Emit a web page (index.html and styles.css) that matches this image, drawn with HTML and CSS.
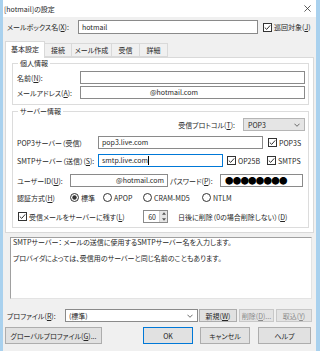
FILE: index.html
```html
<!DOCTYPE html>
<html lang="ja">
<head>
    <meta charset="UTF-8">
    <title>[hotmail]の設定</title>
    <link rel="stylesheet" href="styles.css">
</head>
<body>
    <div class="window">
        <div class="titlebar">
            <span class="title">[hotmail]の設定</span>
            <svg class="close" viewBox="0 0 8 8"><path d="M0.5 0.5 L7.5 7.5 M7.5 0.5 L0.5 7.5" stroke="#333" stroke-width="0.9"/></svg>
        </div>

        <div class="row mailbox-row">
            <span class="lbl w-mailbox">メールボックス名(<u>X</u>):</span>
            <div class="input in-mailbox">hotmail</div>
            <span class="check ml5">
                <svg class="cb" viewBox="0 0 9 9"><rect x="0.5" y="0.5" width="8" height="8" fill="#fff" stroke="#333"/><path d="M1.8 4.6 L3.7 6.4 L7.2 2.4" fill="none" stroke="#333"/></svg>巡回対象(<u>J</u>)
            </span>
        </div>

        <div class="tabs">
            <div class="tab active t1">基本設定</div>
            <div class="tab t2">接続</div>
            <div class="tab t3">メール作成</div>
            <div class="tab t4">受信</div>
            <div class="tab t5">詳細</div>
        </div>

        <div class="panel">
            <fieldset class="group group-personal">
                <legend>個人情報</legend>
                <div class="row r-name">
                    <span class="lbl w-personal">名前(<u>N</u>):</span>
                    <div class="input in-personal"></div>
                </div>
                <div class="row r-mail">
                    <span class="lbl w-personal">メールアドレス(<u>A</u>):</span>
                    <div class="input in-personal addr">@hotmail.com</div>
                </div>
            </fieldset>

            <fieldset class="group group-server">
                <legend>サーバー情報</legend>
                <div class="row r-proto">
                    <span class="lbl">受信プロトコル(<u>T</u>):</span>
                    <div class="select sel-proto">
                        <span>POP3</span>
                        <svg class="arrow" viewBox="0 0 7 4"><path d="M0.5 0.5 L3.5 3.5 L6.5 0.5" fill="none" stroke="#555"/></svg>
                    </div>
                </div>
                <div class="row r-pop">
                    <span class="lbl w-server">POP3サーバー（受信）</span>
                    <div class="input in-pop">pop3.live.com</div>
                    <span class="check ml5">
                        <svg class="cb" viewBox="0 0 9 9"><rect x="0.5" y="0.5" width="8" height="8" fill="#fff" stroke="#333"/><path d="M1.8 4.6 L3.7 6.4 L7.2 2.4" fill="none" stroke="#333"/></svg>POP3S
                    </span>
                </div>
                <div class="row r-smtp">
                    <span class="lbl w-server">SMTPサーバー（送信）(<u>S</u>):</span>
                    <div class="input in-smtp focus">smtp.live.com<span class="caret"></span></div>
                    <span class="check w-op25b">
                        <svg class="cb" viewBox="0 0 9 9"><rect x="0.5" y="0.5" width="8" height="8" fill="#fff" stroke="#333"/><path d="M1.8 4.6 L3.7 6.4 L7.2 2.4" fill="none" stroke="#333"/></svg>OP25B
                    </span>
                    <span class="check">
                        <svg class="cb" viewBox="0 0 9 9"><rect x="0.5" y="0.5" width="8" height="8" fill="#fff" stroke="#333"/><path d="M1.8 4.6 L3.7 6.4 L7.2 2.4" fill="none" stroke="#333"/></svg>SMTPS
                    </span>
                </div>
                <div class="row r-user">
                    <span class="lbl w-user">ユーザーID(<u>U</u>):</span>
                    <div class="input in-user">@hotmail.com</div>
                    <span class="lbl w-pass">パスワード(<u>P</u>):</span>
                    <div class="input in-pass">●●●●●●●●</div>
                </div>
                <div class="row r-auth">
                    <span class="lbl w-user">認証方式(<u>H</u>)</span>
                    <span class="radio w-r1">
                        <svg class="rb" viewBox="0 0 9 9"><circle cx="4.5" cy="4.5" r="4" fill="#fff" stroke="#333"/><circle cx="4.5" cy="4.5" r="2.2" fill="#333"/></svg>標準
                    </span>
                    <span class="radio w-r2">
                        <svg class="rb" viewBox="0 0 9 9"><circle cx="4.5" cy="4.5" r="4" fill="#fff" stroke="#333"/></svg>APOP
                    </span>
                    <span class="radio w-r3">
                        <svg class="rb" viewBox="0 0 9 9"><circle cx="4.5" cy="4.5" r="4" fill="#fff" stroke="#333"/></svg>CRAM-MD5
                    </span>
                    <span class="radio">
                        <svg class="rb" viewBox="0 0 9 9"><circle cx="4.5" cy="4.5" r="4" fill="#fff" stroke="#333"/></svg>NTLM
                    </span>
                </div>
                <div class="row r-leave">
                    <span class="check w-leave">
                        <svg class="cb" viewBox="0 0 9 9"><rect x="0.5" y="0.5" width="8" height="8" fill="#fff" stroke="#333"/><path d="M1.8 4.6 L3.7 6.4 L7.2 2.4" fill="none" stroke="#333"/></svg>受信メールをサーバーに残す(<u>L</u>)
                    </span>
                    <div class="spin">
                        <span class="spin-val">60</span>
                        <span class="spin-btns">
                            <svg viewBox="0 0 5 3"><path d="M0 3 L2.5 0 L5 3 Z" fill="#555"/></svg>
                            <svg viewBox="0 0 5 3"><path d="M0 0 L2.5 3 L5 0 Z" fill="#555"/></svg>
                        </span>
                    </div>
                    <span class="lbl days">日後に削除（0の場合削除しない）(<u>D</u>)</span>
                </div>
            </fieldset>
        </div>

        <div class="desc">
            <p>SMTPサーバー： メールの送信に使用するSMTPサーバー名を入力します。</p>
            <p>&nbsp;</p>
            <p>プロバイダによっては、受信用のサーバーと同じ名前のこともあります。</p>
        </div>

        <div class="row profile-row">
            <span class="lbl w-profile">プロファイル(<u>R</u>):</span>
            <div class="select sel-profile">
                <span>(標準)</span>
                <svg class="arrow" viewBox="0 0 7 4"><path d="M0.5 0.5 L3.5 3.5 L6.5 0.5" fill="none" stroke="#555"/></svg>
            </div>
            <div class="btn small b-new">新規(<u>W</u>)</div>
            <div class="btn small disabled b-del">削除(<u>D</u>)...</div>
            <div class="btn small disabled b-imp">取込(<u>Y</u>)</div>
        </div>

        <div class="row button-row">
            <div class="btn b-global">グローバルプロファイル(<u>G</u>)...</div>
            <div class="btn default b-ok">OK</div>
            <div class="btn b-cancel">キャンセル</div>
            <div class="btn b-help">ヘルプ</div>
        </div>
    </div>
</body>
</html>
```

FILE: styles.css
```css
body {
    margin: 0;
    background-color: #f0f0f0;
    font-family: "Noto Sans CJK JP", "Noto Sans", sans-serif;
    font-size: 7px;
    font-feature-settings: "palt";
    color: #262626;
}

u {
    text-decoration: underline;
    text-decoration-thickness: 0.5px;
    text-underline-offset: 1px;
}

.window {
    width: 313px;
    height: 351px;
    border-left: 3px solid #a9d1ee;
    border-right: 4px solid #a9d1ee;
    background-color: #f0f0f0;
}

.titlebar {
    height: 17px;
    background-color: #fff;
    display: flex;
    align-items: center;
    justify-content: space-between;
    padding: 0 5px 0 1px;
}

.close {
    width: 7px;
    height: 7px;
}

.row {
    display: flex;
    align-items: center;
    height: 13px;
}

.lbl {
    white-space: nowrap;
    flex-shrink: 0;
}

.input {
    height: 13px;
    box-sizing: border-box;
    border: 1px solid #8a8a8a;
    background-color: #fff;
    padding: 0 3px;
    line-height: 11px;
    white-space: nowrap;
    overflow: hidden;
    flex-shrink: 0;
}

.input.focus {
    border-color: #0078d7;
}

.caret {
    display: inline-block;
    width: 1px;
    height: 9px;
    background-color: #000;
    vertical-align: -2px;
}

.check,
.radio {
    display: flex;
    align-items: center;
    white-space: nowrap;
    flex-shrink: 0;
}

.cb,
.rb {
    width: 9px;
    height: 9px;
    margin-right: 2px;
    flex-shrink: 0;
}

.ml5 {
    margin-left: 5px;
}

/* top row */
.mailbox-row {
    margin-top: 3px;
    padding-left: 4px;
    height: 14px;
}

.w-mailbox {
    width: 71px;
}

.in-mailbox {
    width: 180px;
    height: 14px;
    line-height: 12px;
}

/* tabs */
.tabs {
    display: flex;
    align-items: flex-end;
    margin-top: 7px;
    margin-left: 2px;
    height: 16px;
    position: relative;
    z-index: 1;
}

.tab {
    height: 14px;
    box-sizing: border-box;
    border: 1px solid #d9d9d9;
    border-left: none;
    background-color: #f0f0f0;
    text-align: center;
    line-height: 13px;
}

.tab.active {
    height: 17px;
    margin-bottom: -1px;
    border-left: 1px solid #d9d9d9;
    border-bottom: none;
    background-color: #fff;
    line-height: 15px;
}

.t1 { width: 40px; }
.t2 { width: 27px; }
.t3 { width: 40px; }
.t4 { width: 28px; }
.t5 { width: 28px; }

/* panel */
.panel {
    margin: 0 2px;
    height: 176px;
    box-sizing: border-box;
    border: 1px solid #d9d9d9;
    background-color: #fff;
    padding: 0 4px 0 6px;
}

.group {
    margin: 0;
    padding: 0 3px 0 4px;
    border: 1px solid #dcdcdc;
}

.group legend {
    padding: 0 2px;
    margin-left: 1px;
    line-height: 10px;
}

.group-personal {
    padding-bottom: 5px;
}

.r-name {
    margin-top: 3px;
}

.r-mail {
    margin-top: 2px;
}

.w-personal {
    width: 63px;
}

.in-personal {
    width: 225px;
}

.addr {
    padding-left: 69px;
}

.group-server {
    margin-top: 1px;
    padding-bottom: 4px;
}

.r-proto {
    margin-top: 2px;
    justify-content: flex-end;
}

.select {
    height: 13px;
    box-sizing: border-box;
    border: 1px solid #b5b5b5;
    background-color: #e5e5e5;
    display: flex;
    align-items: center;
    justify-content: space-between;
    padding: 0 4px;
    flex-shrink: 0;
}

.arrow {
    width: 6px;
    height: 4px;
}

.sel-proto {
    width: 62px;
    margin-left: 8px;
}

.r-pop {
    margin-top: 5px;
}

.r-smtp {
    margin-top: 5px;
}

.w-server {
    width: 81px;
}

.in-pop {
    width: 165px;
}

.in-smtp {
    width: 125px;
    margin-right: 4px;
}

.w-op25b {
    width: 40px;
}

.r-user {
    margin-top: 7px;
}

.w-user {
    width: 53px;
}

.in-user {
    width: 98px;
    text-align: right;
}

.w-pass {
    width: 50px;
    margin-left: 2px;
}

.in-pass {
    width: 83px;
    font-size: 8.5px;
    color: #000;
    letter-spacing: -0.8px;
    line-height: 11px;
    padding-left: 4px;
}

.r-auth {
    margin-top: 4px;
}

.w-r1 { width: 33px; }
.w-r2 { width: 40px; }
.w-r3 { width: 59px; }

.r-leave {
    margin-top: 6px;
}

.w-leave {
    width: 125px;
    margin-left: 1px;
}

.spin {
    width: 25px;
    height: 13px;
    box-sizing: border-box;
    border: 1px solid #8a8a8a;
    background-color: #fff;
    display: flex;
    align-items: center;
    justify-content: flex-end;
    flex-shrink: 0;
}

.spin-val {
    padding-right: 3px;
}

.spin-btns {
    display: flex;
    flex-direction: column;
    justify-content: space-around;
    align-items: center;
    width: 7px;
    height: 11px;
    background-color: #e5e5e5;
    border-left: 1px solid #d0d0d0;
}

.spin-btns svg {
    width: 4px;
    height: 3px;
}

.days {
    margin-left: 10px;
}

/* description */
.desc {
    margin: 4px 4px 0 7px;
    height: 62px;
    box-sizing: border-box;
    border: 1px solid #a0a0a0;
    border-right-color: #e3e3e3;
    border-bottom-color: #e3e3e3;
    background-color: #fff;
    padding: 0 2px;
}

.desc p {
    margin: 0;
    line-height: 8px;
}

/* profile */
.profile-row {
    margin-top: 10px;
    padding-left: 4px;
}

.w-profile {
    width: 58px;
}

.sel-profile {
    width: 133px;
    background-color: #fff;
    border-color: #8a8a8a;
    padding-left: 3px;
}

.btn {
    height: 17px;
    box-sizing: border-box;
    border: 1px solid #adadad;
    background-color: #e1e1e1;
    display: flex;
    align-items: center;
    justify-content: center;
    white-space: nowrap;
    flex-shrink: 0;
}

.btn.small {
    height: 13px;
}

.btn.disabled {
    color: #8a8a8a;
    background-color: #e3e3e3;
    border-color: #c8c8c8;
}

.btn.default {
    border-color: #0078d7;
}

.b-new { width: 38px; margin-left: 1px; }
.b-del { width: 35px; margin-left: 2px; }
.b-imp { width: 36px; margin-left: 2px; }

.button-row {
    margin-top: 5px;
    padding-left: 2px;
    height: 17px;
}

.b-global { width: 97px; }
.b-ok { width: 50px; margin-left: 41px; }
.b-cancel { width: 50px; margin-left: 7px; }
.b-help { width: 53px; margin-left: 8px; }
```
